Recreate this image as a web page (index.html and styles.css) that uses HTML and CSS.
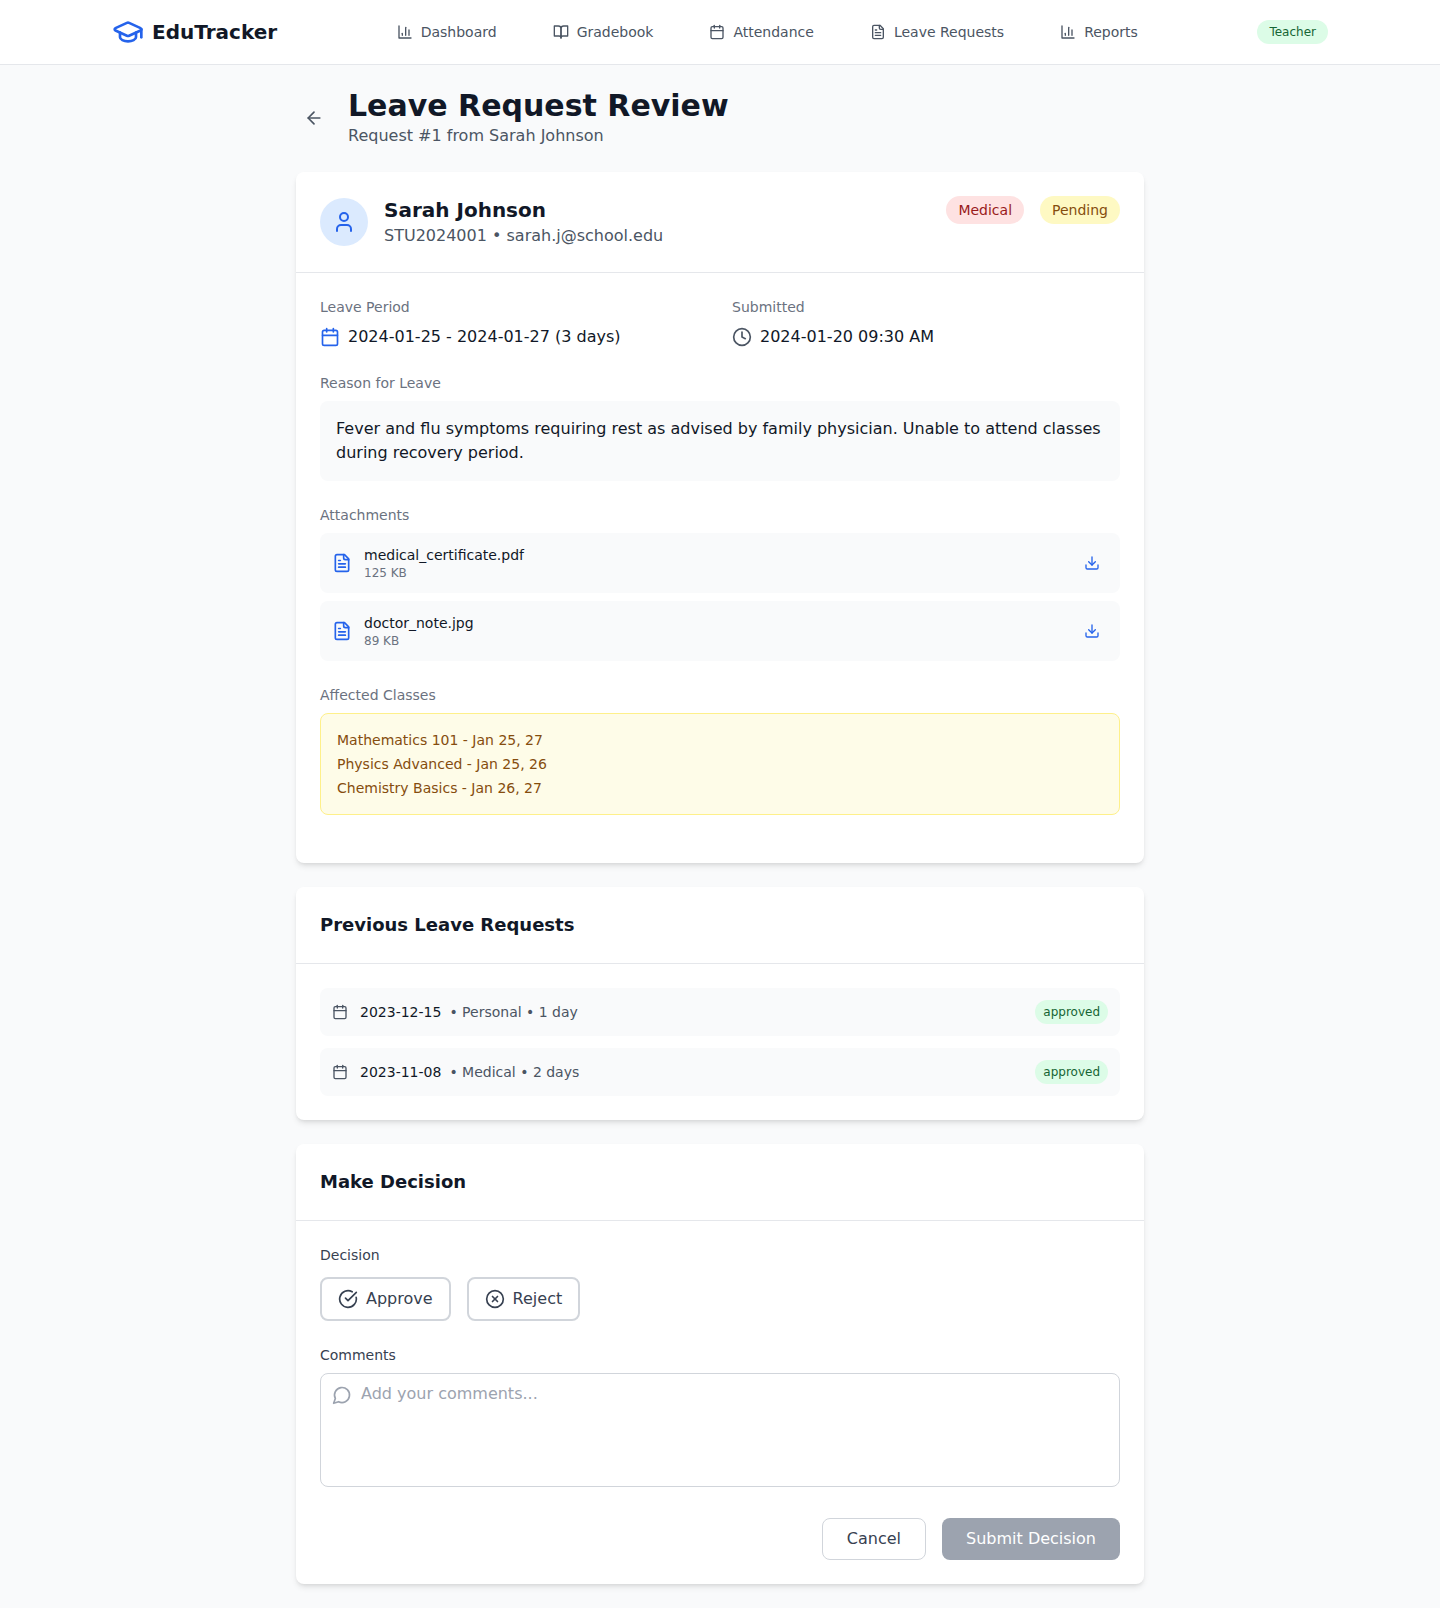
FILE: index.html
```html
<!DOCTYPE html>
<html lang="en">
<head>
<meta charset="utf-8">
<title>EduTracker - Leave Request Review</title>
<link rel="stylesheet" href="styles.css">
</head>
<body>
<svg class="sprite" aria-hidden="true">
  <symbol id="cap" viewBox="0 0 24 24"><path d="M21.42 10.922a1 1 0 0 0-.019-1.838L12.83 5.18a2 2 0 0 0-1.66 0L2.6 9.08a1 1 0 0 0 0 1.832l8.57 3.908a2 2 0 0 0 1.66 0z"/><path d="M22 10v6"/><path d="M6 12.5V16a6 3 0 0 0 12 0v-3.5"/></symbol>
  <symbol id="chart" viewBox="0 0 24 24"><path d="M3 3v18h18"/><path d="M18 17V9"/><path d="M13 17V5"/><path d="M8 17v-3"/></symbol>
  <symbol id="book" viewBox="0 0 24 24"><path d="M2 3h6a4 4 0 0 1 4 4v14a3 3 0 0 0-3-3H2z"/><path d="M22 3h-6a4 4 0 0 0-4 4v14a3 3 0 0 1 3-3h7z"/></symbol>
  <symbol id="calendar" viewBox="0 0 24 24"><path d="M8 2v4"/><path d="M16 2v4"/><rect width="18" height="18" x="3" y="4" rx="2"/><path d="M3 10h18"/></symbol>
  <symbol id="file" viewBox="0 0 24 24"><path d="M15 2H6a2 2 0 0 0-2 2v16a2 2 0 0 0 2 2h12a2 2 0 0 0 2-2V7Z"/><path d="M14 2v4a2 2 0 0 0 2 2h4"/><path d="M10 9H8"/><path d="M16 13H8"/><path d="M16 17H8"/></symbol>
  <symbol id="arrow-left" viewBox="0 0 24 24"><path d="m12 19-7-7 7-7"/><path d="M19 12H5"/></symbol>
  <symbol id="user" viewBox="0 0 24 24"><path d="M19 21v-2a4 4 0 0 0-4-4H9a4 4 0 0 0-4 4v2"/><circle cx="12" cy="7" r="4"/></symbol>
  <symbol id="clock" viewBox="0 0 24 24"><circle cx="12" cy="12" r="10"/><polyline points="12 6 12 12 16 14"/></symbol>
  <symbol id="download" viewBox="0 0 24 24"><path d="M21 15v4a2 2 0 0 1-2 2H5a2 2 0 0 1-2-2v-4"/><polyline points="7 10 12 15 17 10"/><path d="M12 15V3"/></symbol>
  <symbol id="check" viewBox="0 0 24 24"><path d="M21.801 10A10 10 0 1 1 17 3.335"/><path d="m9 11 3 3L22 4"/></symbol>
  <symbol id="cross" viewBox="0 0 24 24"><circle cx="12" cy="12" r="10"/><path d="m15 9-6 6"/><path d="m9 9 6 6"/></symbol>
  <symbol id="message" viewBox="0 0 24 24"><path d="M7.9 20A9 9 0 1 0 4 16.1L2 22Z"/></symbol>
</svg>

<header class="topbar">
  <div class="topbar-inner">
    <a class="brand"><svg class="icon icon-lg blue"><use href="#cap"/></svg><span>EduTracker</span></a>
    <nav class="nav">
      <a class="nav-item"><svg class="icon icon-sm"><use href="#chart"/></svg>Dashboard</a>
      <a class="nav-item"><svg class="icon icon-sm"><use href="#book"/></svg>Gradebook</a>
      <a class="nav-item"><svg class="icon icon-sm"><use href="#calendar"/></svg>Attendance</a>
      <a class="nav-item"><svg class="icon icon-sm"><use href="#file"/></svg>Leave Requests</a>
      <a class="nav-item"><svg class="icon icon-sm"><use href="#chart"/></svg>Reports</a>
    </nav>
    <span class="role">Teacher</span>
  </div>
</header>

<main class="page">
  <div class="page-head">
    <button class="icon-button gray" aria-label="Back"><svg class="icon"><use href="#arrow-left"/></svg></button>
    <div>
      <h1>Leave Request Review</h1>
      <p class="muted">Request #1 from Sarah Johnson</p>
    </div>
  </div>

  <section class="card">
    <div class="card-head student-head">
      <div class="student">
        <div class="avatar"><svg class="icon icon-md"><use href="#user"/></svg></div>
        <div>
          <h2>Sarah Johnson</h2>
          <p class="muted">STU2024001 • sarah.j@school.edu</p>
        </div>
      </div>
      <div class="tags">
        <span class="tag tag-medical">Medical</span>
        <span class="tag tag-pending">Pending</span>
      </div>
    </div>
    <div class="card-body details">
      <div class="columns">
        <div class="field">
          <h3 class="label">Leave Period</h3>
          <div class="value"><svg class="icon blue"><use href="#calendar"/></svg>2024-01-25 - 2024-01-27 (3 days)</div>
        </div>
        <div class="field">
          <h3 class="label">Submitted</h3>
          <div class="value"><svg class="icon gray"><use href="#clock"/></svg>2024-01-20 09:30 AM</div>
        </div>
      </div>
      <div class="field">
        <h3 class="label">Reason for Leave</h3>
        <p class="reason">Fever and flu symptoms requiring rest as advised by family physician. Unable to attend classes during recovery period.</p>
      </div>
      <div class="field">
        <h3 class="label">Attachments</h3>
        <div class="file">
          <svg class="icon blue"><use href="#file"/></svg>
          <div class="file-text"><p class="file-name">medical_certificate.pdf</p><p class="file-size">125 KB</p></div>
          <button class="icon-button blue" aria-label="Download"><svg class="icon icon-sm"><use href="#download"/></svg></button>
        </div>
        <div class="file">
          <svg class="icon blue"><use href="#file"/></svg>
          <div class="file-text"><p class="file-name">doctor_note.jpg</p><p class="file-size">89 KB</p></div>
          <button class="icon-button blue" aria-label="Download"><svg class="icon icon-sm"><use href="#download"/></svg></button>
        </div>
      </div>
      <div class="field">
        <h3 class="label">Affected Classes</h3>
        <ul class="classes">
          <li>Mathematics 101 - Jan 25, 27</li>
          <li>Physics Advanced - Jan 25, 26</li>
          <li>Chemistry Basics - Jan 26, 27</li>
        </ul>
      </div>
    </div>
  </section>

  <section class="card">
    <div class="card-head"><h2 class="card-title">Previous Leave Requests</h2></div>
    <div class="card-body history">
      <div class="history-row">
        <svg class="icon icon-sm gray"><use href="#calendar"/></svg>
        <p class="history-text">2023-12-15<span>• Personal • 1 day</span></p>
        <span class="status">approved</span>
      </div>
      <div class="history-row">
        <svg class="icon icon-sm gray"><use href="#calendar"/></svg>
        <p class="history-text">2023-11-08<span>• Medical • 2 days</span></p>
        <span class="status">approved</span>
      </div>
    </div>
  </section>

  <section class="card">
    <div class="card-head"><h2 class="card-title">Make Decision</h2></div>
    <form class="card-body">
      <p class="form-label">Decision</p>
      <div class="choices">
        <button type="button" class="choice"><svg class="icon"><use href="#check"/></svg>Approve</button>
        <button type="button" class="choice"><svg class="icon"><use href="#cross"/></svg>Reject</button>
      </div>
      <label class="form-label" for="comments">Comments</label>
      <div class="comment-box">
        <svg class="icon comment-icon"><use href="#message"/></svg>
        <textarea id="comments" rows="4" placeholder="Add your comments..."></textarea>
      </div>
      <div class="actions">
        <button type="button" class="button cancel">Cancel</button>
        <button type="button" class="button submit" disabled>Submit Decision</button>
      </div>
    </form>
  </section>
</main>
</body>
</html>
```
FILE: styles.css
```css
*, *::before, *::after { box-sizing: border-box; }

body {
  margin: 0;
  background: #f9fafb;
  color: #111827;
  font: 16px/24px "DejaVu Sans", sans-serif;
}

h1, h2, h3, p, ul { margin: 0; padding: 0; }
ul { list-style: none; }
button, textarea { font: inherit; }
button { margin: 0; background: none; border: 0; }

.sprite { display: none; }

.icon {
  display: block;
  flex: none;
  width: 20px;
  height: 20px;
  fill: none;
  stroke: currentColor;
  stroke-width: 2;
  stroke-linecap: round;
  stroke-linejoin: round;
}
.icon-sm { width: 16px; height: 16px; }
.icon-md { width: 24px; height: 24px; }
.icon-lg { width: 32px; height: 32px; }

.blue { color: #2563eb; }
.gray, .muted { color: #4b5563; }

/* Top bar */
.topbar {
  background: #fff;
  height: 65px;
  margin-bottom: -1px;
  border-bottom: 1px solid #e5e7eb;
}
.topbar-inner {
  display: flex;
  align-items: center;
  justify-content: space-between;
  max-width: 1280px;
  height: 64px;
  margin: 0 auto;
  padding: 0 32px;
}
.brand {
  display: flex;
  align-items: center;
  gap: 8px;
  font-size: 20px;
  line-height: 28px;
  font-weight: 700;
}
.nav { display: flex; gap: 32px; }
.nav-item {
  display: flex;
  align-items: center;
  gap: 8px;
  padding: 8px 12px;
  color: #4b5563;
  font-size: 14px;
  line-height: 20px;
}
.role, .status {
  border-radius: 999px;
  background: #dcfce7;
  color: #166534;
  font-size: 12px;
  line-height: 16px;
}
.role { padding: 4px 12px; }
.status { padding: 4px 8px; }

/* Page */
.page {
  display: flex;
  flex-direction: column;
  gap: 24px;
  max-width: 896px;
  margin: 0 auto;
  padding: 24px;
}
.page-head { display: flex; align-items: center; gap: 16px; }
h1 { font-size: 30px; line-height: 36px; }
h2 { font-size: 20px; line-height: 28px; }
.icon-button { padding: 8px; border-radius: 8px; }

/* Cards */
.card {
  background: #fff;
  border-radius: 8px;
  box-shadow: 0 4px 6px -1px rgb(0 0 0 / 0.1), 0 2px 4px -2px rgb(0 0 0 / 0.1);
}
.card-head { padding: 24px; border-bottom: 1px solid #e5e7eb; }
.card-title { font-size: 18px; }
.card-body { padding: 24px; }

.student-head { display: flex; align-items: flex-start; justify-content: space-between; }
.student { display: flex; align-items: center; gap: 16px; }
.avatar {
  display: grid;
  place-items: center;
  width: 48px;
  height: 48px;
  border-radius: 50%;
  background: #dbeafe;
  color: #2563eb;
}
.tags { display: flex; gap: 16px; }
.tag { padding: 4px 12px; border-radius: 999px; font-size: 14px; line-height: 20px; }
.tag-medical { background: #fee2e2; color: #991b1b; }
.tag-pending { background: #fef9c3; color: #854d0e; }

/* Request details */
.details { display: flex; flex-direction: column; gap: 24px; padding-bottom: 48px; }
.columns { display: grid; grid-template-columns: 1fr 1fr; gap: 24px; }
.field { display: flex; flex-direction: column; gap: 8px; }
.label { color: #6b7280; font-size: 14px; line-height: 20px; font-weight: 400; }
.value { display: flex; align-items: center; gap: 8px; }
.reason { padding: 16px; border-radius: 8px; background: #f9fafb; }
.file {
  display: flex;
  align-items: center;
  gap: 12px;
  padding: 12px;
  border-radius: 8px;
  background: #f9fafb;
}
.file-text { flex: 1; }
.file-name { font-size: 14px; line-height: 20px; }
.file-size { color: #6b7280; font-size: 12px; line-height: 16px; }
.classes {
  display: flex;
  flex-direction: column;
  gap: 4px;
  padding: 16px;
  border: 1px solid #fef08a;
  border-radius: 8px;
  background: #fefce8;
  color: #854d0e;
  font-size: 14px;
  line-height: 20px;
}

/* History */
.history { display: flex; flex-direction: column; gap: 12px; }
.history-row {
  display: flex;
  align-items: center;
  gap: 12px;
  padding: 12px;
  border-radius: 8px;
  background: #f9fafb;
}
.history-text { flex: 1; font-size: 14px; line-height: 20px; }
.history-text span { margin-left: 8px; color: #4b5563; }

/* Decision form */
.form-label { display: block; color: #374151; font-size: 14px; line-height: 20px; }
.choices { display: flex; gap: 16px; margin: 12px 0 24px; }
.choice {
  display: flex;
  align-items: center;
  gap: 8px;
  padding: 8px 16px;
  border: 2px solid #d1d5db;
  border-radius: 8px;
  color: #374151;
}
.comment-box { position: relative; margin: 8px 0 31px; }
.comment-icon { position: absolute; left: 12px; top: 12px; color: #9ca3af; }
textarea {
  display: block;
  width: 100%;
  height: 114px;
  padding: 8px 12px 8px 40px;
  border: 1px solid #d1d5db;
  border-radius: 8px;
  background: transparent;
  resize: none;
}
textarea::placeholder { color: #9ca3af; }
.actions { display: flex; justify-content: flex-end; gap: 16px; }
.button { padding: 8px 24px; border-radius: 8px; }
.cancel { border: 1px solid #d1d5db; color: #374151; }
.submit { background: #9ca3af; color: #fff; }
```
